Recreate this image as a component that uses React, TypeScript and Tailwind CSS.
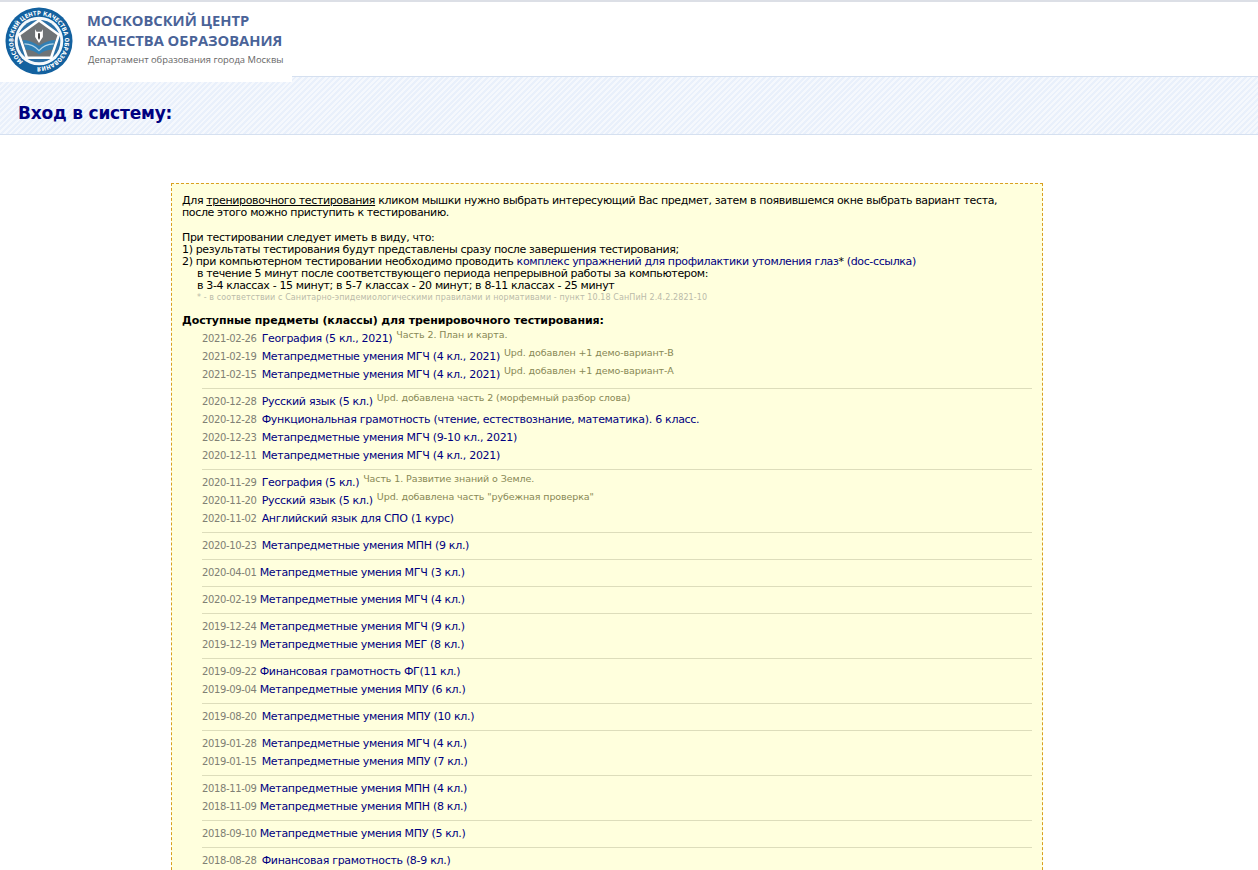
const font = "font-['Tahoma','DejaVu_Sans',sans-serif]";

type Row = { date: string; title: string; note?: string; wide?: boolean };

const groups: Row[][] = [
  [
    { date: "2021-02-26", title: "География (5 кл., 2021)", note: "Часть 2. План и карта.", wide: true },
    { date: "2021-02-19", title: "Метапредметные умения МГЧ (4 кл., 2021)", note: "Upd. добавлен +1 демо-вариант-В", wide: true },
    { date: "2021-02-15", title: "Метапредметные умения МГЧ (4 кл., 2021)", note: "Upd. добавлен +1 демо-вариант-А", wide: true },
  ],
  [
    { date: "2020-12-28", title: "Русский язык (5 кл.)", note: "Upd. добавлена часть 2 (морфемный разбор слова)", wide: true },
    { date: "2020-12-28", title: "Функциональная грамотность (чтение, естествознание, математика). 6 класс.", wide: true },
    { date: "2020-12-23", title: "Метапредметные умения МГЧ (9-10 кл., 2021)", wide: true },
    { date: "2020-12-11", title: "Метапредметные умения МГЧ (4 кл., 2021)", wide: true },
  ],
  [
    { date: "2020-11-29", title: "География (5 кл.)", note: "Часть 1. Развитие знаний о Земле.", wide: true },
    { date: "2020-11-20", title: "Русский язык (5 кл.)", note: 'Upd. добавлена часть "рубежная проверка"', wide: true },
    { date: "2020-11-02", title: "Английский язык для СПО (1 курс)", wide: true },
  ],
  [{ date: "2020-10-23", title: "Метапредметные умения МПН (9 кл.)", wide: true }],
  [{ date: "2020-04-01", title: "Метапредметные умения МГЧ (3 кл.)" }],
  [{ date: "2020-02-19", title: "Метапредметные умения МГЧ (4 кл.)" }],
  [
    { date: "2019-12-24", title: "Метапредметные умения МГЧ (9 кл.)" },
    { date: "2019-12-19", title: "Метапредметные умения МЕГ (8 кл.)" },
  ],
  [
    { date: "2019-09-22", title: "Финансовая грамотность ФГ(11 кл.)" },
    { date: "2019-09-04", title: "Метапредметные умения МПУ (6 кл.)" },
  ],
  [{ date: "2019-08-20", title: "Метапредметные умения МПУ (10 кл.)", wide: true }],
  [
    { date: "2019-01-28", title: "Метапредметные умения МГЧ (4 кл.)", wide: true },
    { date: "2019-01-15", title: "Метапредметные умения МПУ (7 кл.)", wide: true },
  ],
  [
    { date: "2018-11-09", title: "Метапредметные умения МПН (4 кл.)" },
    { date: "2018-11-09", title: "Метапредметные умения МПН (8 кл.)" },
  ],
  [{ date: "2018-09-10", title: "Метапредметные умения МПУ (5 кл.)" }],
  [{ date: "2018-08-28", title: "Финансовая грамотность (8-9 кл.)", wide: true }],
];

function Logo() {
  return (
    <svg width="68" height="68" viewBox="0 0 70 70" className="shrink-0">
      <defs>
        <path id="ring" d="M35 35 m0 -26.5 a26.5 26.5 0 1 1 0 53 a26.5 26.5 0 1 1 0 -53" />
      </defs>
      <circle cx="35" cy="35" r="34.5" fill="#13619f" />
      <circle cx="35" cy="35" r="25" fill="#f4f8fb" />
      <circle cx="35" cy="35" r="22" fill="#2a6fa6" />
      <polygon points="35,12 57,28 48.5,53.5 21.5,53.5 13,28" fill="#ffffff" />
      <polygon points="35,15.5 54,29 46.5,51 23.5,51 16,29" fill="#6f7376" />
      <path d="M35 40 q-9 -6 -17 -6 l3.5 10 q8 0 13.5 5 q5.5 -5 13.5 -5 l3.5 -10 q-8 0 -17 6 z" fill="#2f7fb5" />
      <path d="M20 38 q9 0 15 7 q6 -7 15 -7" fill="none" stroke="#b9d6e8" strokeWidth="1.2" />
      <path d="M31 23 l1.5 2.5 h5 l1.5 -2.5 v8 l-4 6 l-4 -6 z" fill="#ffffff" />
      <path d="M34 27 h2 v5 l-1 2 l-1 -2 z" fill="#444" />
      <g transform="rotate(218 35 35)">
        <text fontSize="6.2" fontWeight="700" fill="#ffffff" fontFamily="'DejaVu Sans',sans-serif">
          <textPath href="#ring" startOffset="0" textLength="150" lengthAdjust="spacingAndGlyphs">МОСКОВСКИЙ ЦЕНТР КАЧЕСТВА ОБРАЗОВАНИЯ</textPath>
        </text>
      </g>
    </svg>
  );
}

export default function App() {
  return (
    <div className={`h-[870px] overflow-hidden border-t-2 border-[#dcdfe6] bg-white ${font}`}>
      <header className="relative z-10 h-[80px] w-[292px] bg-white pl-[5px] pt-[5px]">
        <div className="flex">
          <Logo />
          <div className="ml-[14px] font-['Open_Sans','Noto_Sans',sans-serif] text-[#4a6398]">
            <p className="pt-[3px] text-[14.7px] leading-[20px] font-bold whitespace-nowrap">МОСКОВСКИЙ ЦЕНТР</p>
            <p className="text-[14.7px] leading-[20px] font-bold whitespace-nowrap">КАЧЕСТВА ОБРАЗОВАНИЯ</p>
            <p className="mt-[4px] pl-px text-[9.4px] leading-[12px] whitespace-nowrap text-[#666]">Департамент образования города Москвы</p>
          </div>
        </div>
      </header>

      <div className="mt-[-6px] flex h-[59px] items-center border-y border-[#d5e0f0] bg-[repeating-linear-gradient(135deg,#e9f0fb_0px,#e9f0fb_2px,#f5f8fd_2px,#f5f8fd_4px)] pl-[18px] pt-[17px]">
        <h1 className="text-[17px] font-bold tracking-[-0.2px] text-[#000080]">Вход в систему:</h1>
      </div>

      <main className="mt-[48px] ml-[171px] w-[872px] border border-dashed border-[#d9a020] bg-[#ffffdd] px-[10px] pt-[11px] pb-[60px] text-[11px] leading-[12px] tracking-[-0.36px] text-black">
        <p className="whitespace-nowrap">
          Для <span className="underline">тренировочного тестирования</span> кликом мышки нужно выбрать интересующий Вас предмет, затем в появившемся окне выбрать вариант теста,
          <br />
          после этого можно приступить к тестированию.
        </p>
        <p className="mt-[13px]">При тестировании следует иметь в виду, что:</p>
        <p>1) результаты тестирования будут представлены сразу после завершения тестирования;</p>
        <p>
          2) при компьютерном тестировании необходимо проводить <span className="text-[#000080]">комплекс упражнений для профилактики утомления глаз</span>* <span className="text-[#000080]">(doc-ссылка)</span>
        </p>
        <p className="pl-[15px]">в течение 5 минут после соответствующего периода непрерывной работы за компьютером:</p>
        <p className="pl-[15px]">в 3-4 классах - 15 минут; в 5-7 классах - 20 минут; в 8-11 классах - 25 минут</p>
        <p className="pl-[15px] text-[8px] leading-[11px] tracking-[0.1px] text-[#bbbbaa]">* - в соответствии с Санитарно-эпидемиологическими правилами и нормативами - пункт 10.18 СанПиН 2.4.2.2821-10</p>

        <h2 className="mt-[12px] text-[11px] leading-[11px] font-bold tracking-[-0.1px]">Доступные предметы (классы) для тренировочного тестирования:</h2>

        <div className="ml-[20px]">
          {groups.map((group, i) => (
            <div key={i} className="border-b border-[#ddddbb] pt-[4px] pb-[4px] last:border-b-0">
              {group.map((row, j) => (
                <div key={j} className="flex h-[18px] items-center whitespace-nowrap">
                  <span className={`text-[10px] tracking-[-0.35px] text-[#808074] ${row.wide ? "mr-[5px]" : "mr-[3px]"}`}>{row.date}</span>
                  <span className="text-[11px] tracking-[-0.3px] text-[#000080]">{row.title}</span>
                  {row.note && <span className="relative top-[-4px] ml-[4px] text-[9.5px] tracking-[-0.1px] text-[#888855]">{row.note}</span>}
                </div>
              ))}
            </div>
          ))}
        </div>
      </main>
    </div>
  );
}
